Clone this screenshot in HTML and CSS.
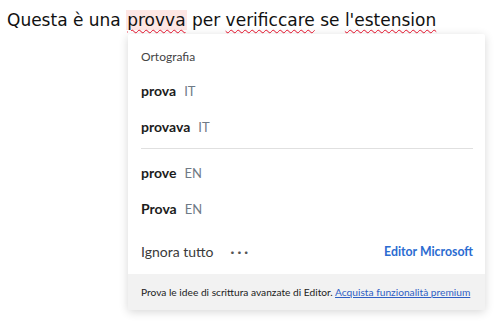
FILE: index.html
```html
<!DOCTYPE html>
<html lang="it">
<head>
    <meta charset="UTF-8">
    <title>Editor</title>
    <link rel="stylesheet" href="styles.css">
</head>
<body>
    <div class="doc">
        <p class="line">Questa è una <span class="err current">provva</span> per <span class="err">verificcare</span> se <span class="err">l'estension</span></p>

        <div class="popup">
            <div class="section-title">Ortografia</div>

            <div class="suggestion"><b>prova</b><span class="lang">IT</span></div>
            <div class="suggestion"><b>provava</b><span class="lang">IT</span></div>

            <div class="divider"></div>

            <div class="suggestion"><b>prove</b><span class="lang">EN</span></div>
            <div class="suggestion"><b>Prova</b><span class="lang">EN</span></div>

            <div class="actions">
                <span class="ignore">Ignora tutto</span>
                <span class="more">&middot;&middot;&middot;</span>
                <a class="brand" href="#">Editor Microsoft</a>
            </div>

            <div class="footer">
                Prova le idee di scrittura avanzate di Editor. <a href="#">Acquista funzionalità premium</a>
            </div>
        </div>
    </div>
</body>
</html>
```

FILE: styles.css
```css
body {
    margin: 0;
    background: #fff;
    font-family: "DejaVu Sans", Verdana, sans-serif;
    color: #111;
}

.doc {
    position: relative;
    height: 326px;
}

.line {
    margin: 0;
    padding: 8px 0 0 7px;
    font-size: 17px;
    line-height: 24px;
    white-space: nowrap;
}

.err {
    text-decoration: underline wavy #e8102a;
    text-decoration-thickness: 1px;
    text-underline-offset: 3px;
}

.current {
    background: #fde6e4;
    padding: 0 1px;
}

/* popup */
.popup {
    position: absolute;
    left: 128px;
    top: 34px;
    width: 357px;
    background: #fff;
    border-radius: 2px;
    box-shadow: 0 2px 10px rgba(0, 0, 0, 0.16);
    font-family: Lato, "Noto Sans", sans-serif;
    color: #1c1c1c;
}

.section-title {
    padding: 12px 13px 0;
    height: 22px;
    line-height: 22px;
    font-size: 12px;
    color: #444;
    margin-bottom: 5px;
}

.suggestion {
    height: 36px;
    line-height: 36px;
    padding: 0 13px;
    font-size: 14px;
}

.suggestion b {
    font-weight: 700;
}

.lang {
    margin-left: 8px;
    font-size: 13px;
    color: #6f7a86;
}

.divider {
    height: 1px;
    background: #e0e0e0;
    margin: 3px 12px 6px 13px;
}

.actions {
    display: flex;
    align-items: center;
    height: 36px;
    margin-top: 6px;
    margin-bottom: 5px;
    padding: 0 12px 0 13px;
    font-size: 14px;
}

.ignore {
    color: #3a3a3a;
}

.more {
    margin-left: 17px;
    letter-spacing: 3px;
    color: #555;
    font-weight: bold;
}

.brand {
    margin-left: auto;
    color: #2b6cd1;
    text-decoration: none;
    font-size: 12.3px;
    font-weight: 700;
}

.footer {
    background: #f2f2f2;
    height: 36px;
    line-height: 36px;
    padding: 0 12px 0 13px;
    font-size: 10.2px;
    color: #222;
    white-space: nowrap;
}

.footer a {
    color: #2f5fc4;
    text-decoration: underline;
}
```
